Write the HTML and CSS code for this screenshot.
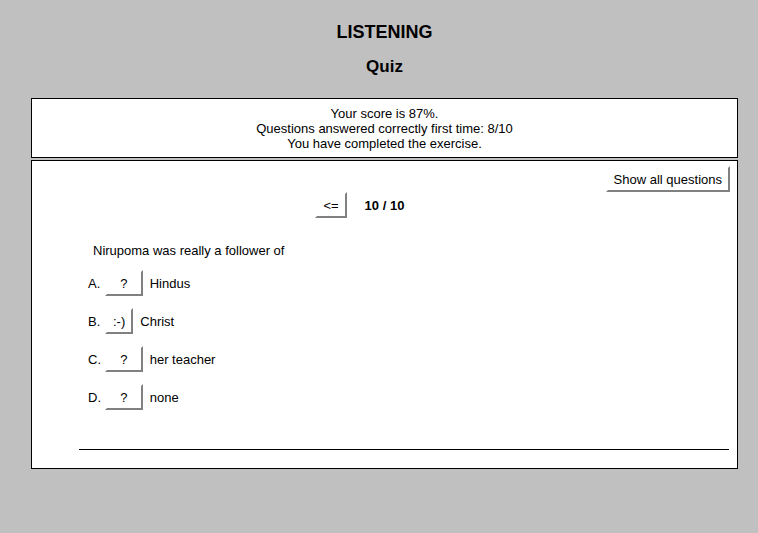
FILE: index.html
```html
<!DOCTYPE html>
<html>
<head>
<meta charset="utf-8">
<link rel="stylesheet" href="styles.css">
</head>
<body>
<div class="page">
  <div class="titles">
    <h2 class="title">LISTENING</h2>
    <h3 class="subtitle">Quiz</h3>
  </div>
  <div class="box feedback">
    <div>Your score is 87%.</div>
    <div>Questions answered correctly first time: 8/10</div>
    <div>You have completed the exercise.</div>
  </div>
  <div class="box quiz">
    <div class="showall-row">
      <button class="btn">Show all questions</button>
    </div>
    <div class="nav-row">
      <button class="btn">&lt;=</button>
      <span class="qnum">10 / 10</span>
      <button class="btn hidden">=&gt;</button>
    </div>
    <div class="question">
      <div class="qtext">Nirupoma was really a follower of</div>
      <ol class="answers">
        <li class="answer"><span class="letter">A.</span><button class="btn">&nbsp;&nbsp;?&nbsp;&nbsp;</button><span class="atext">Hindus</span></li>
        <li class="answer"><span class="letter">B.</span><button class="btn">:-)</button><span class="atext">Christ</span></li>
        <li class="answer"><span class="letter">C.</span><button class="btn">&nbsp;&nbsp;?&nbsp;&nbsp;</button><span class="atext">her teacher</span></li>
        <li class="answer"><span class="letter">D.</span><button class="btn">&nbsp;&nbsp;?&nbsp;&nbsp;</button><span class="atext">none</span></li>
      </ol>
    </div>
    <hr class="rule">
  </div>
</div>
</body>
</html>
```

FILE: styles.css
```css
html, body {
  margin: 0;
  padding: 0;
  background: #c0c0c0;
}
body {
  font-family: "Liberation Sans", Arial, sans-serif;
  font-size: 13px;
  color: #000;
}
.page {
  margin: 0 20px 0 31px;
  padding-top: 22px;
}
.titles {
  text-align: center;
}
.title {
  font-size: 18px;
  font-weight: bold;
  margin: 0;
  line-height: 20px;
}
.subtitle {
  font-size: 17px;
  font-weight: bold;
  margin: 15px 0 0 0;
  line-height: 20px;
}
.box {
  background: #fff;
  border: 1px solid #000;
}
.feedback {
  margin-top: 21px;
  text-align: center;
  line-height: 15px;
  padding: 7px 0 6px;
}
.quiz {
  margin-top: 2px;
  padding: 5px 7px 18px 7px;
}
.btn {
  font-family: "Liberation Sans", Arial, sans-serif;
  font-size: 13px;
  line-height: 15px;
  color: #000;
  background: #fff;
  border-style: solid;
  border-width: 2px;
  border-color: #fff #808080 #808080 #fff;
  padding: 4px 6px 3px;
  margin: 0;
  cursor: pointer;
}
.showall-row {
  display: flex;
  justify-content: flex-end;
}
.nav-row {
  display: flex;
  justify-content: center;
  align-items: center;
  gap: 18px;
  padding-left: 0;
}
.qnum {
  font-weight: bold;
}
.hidden {
  visibility: hidden;
}
.question {
  padding-left: 53px;
  margin-top: 25px;
}
.qtext {
  line-height: 15px;
  padding-left: 1px;
}
.answers {
  list-style: none;
  margin: 12px 0 0 0;
  padding: 0;
}
.answer {
  display: flex;
  align-items: center;
  height: 26px;
  margin-bottom: 12px;
}
.letter {
  width: 17px;
  margin-left: -4px;
}
.atext {
  margin-left: 7px;
}
.rule {
  border: 0;
  border-top: 1px solid #000;
  margin: 39px 1px 0 40px;
  height: 0;
}
```
